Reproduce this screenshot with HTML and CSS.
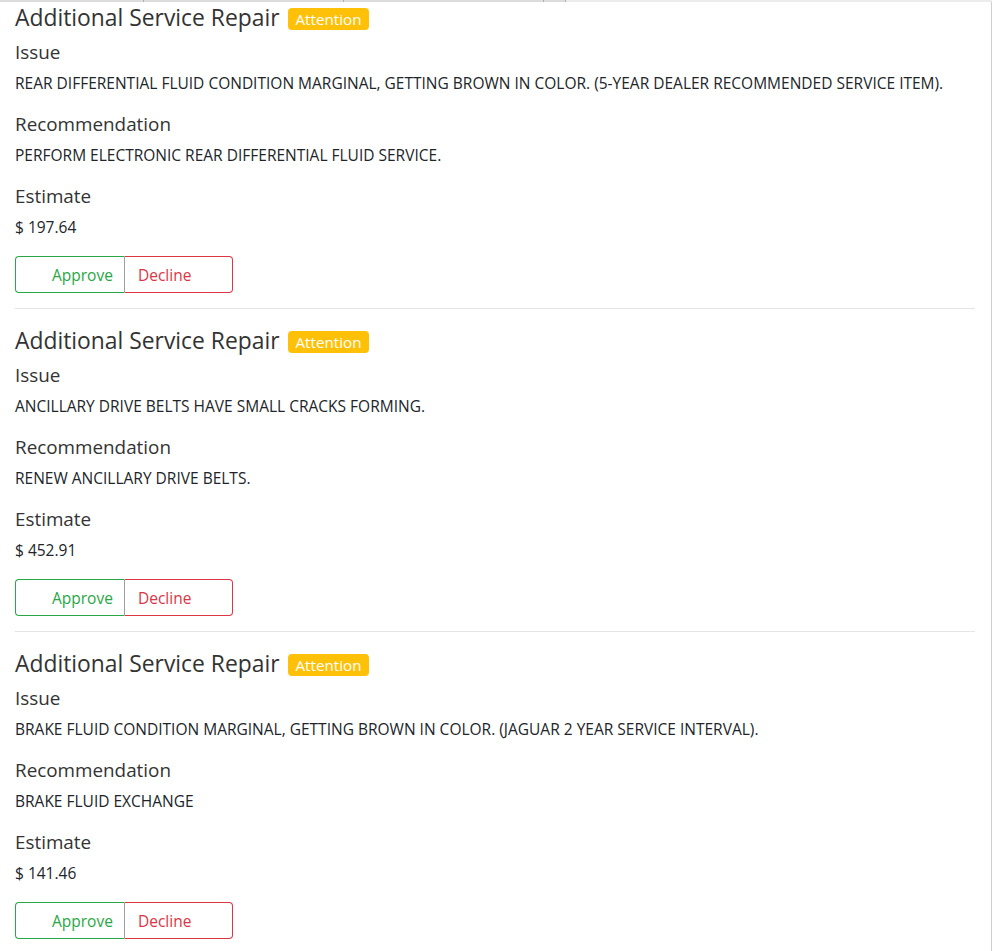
FILE: index.html
```html
<!DOCTYPE html>
<html>
<head>
<meta charset="utf-8">
<link rel="stylesheet" href="styles.css">
</head>
<body>
<div class="topbar">
  <div class="seg seg1"></div>
  <div class="seg seg2"></div>
  <div class="seg seg3"></div>
  <div class="seg seg4"></div>
  <div class="seg rest"></div>
</div>
<div class="page">
  <div class="container">
    <section class="repair">
      <h4 class="title"><span>Additional Service Repair</span><span class="badge">Attention</span></h4>
      <h5 class="label">Issue</h5>
      <p class="text">REAR DIFFERENTIAL FLUID CONDITION MARGINAL, GETTING BROWN IN COLOR. (5-YEAR DEALER RECOMMENDED SERVICE ITEM).</p>
      <h5 class="label">Recommendation</h5>
      <p class="text">PERFORM ELECTRONIC REAR DIFFERENTIAL FLUID SERVICE.</p>
      <h5 class="label">Estimate</h5>
      <p class="text">$ 197.64</p>
      <div class="btn-group">
        <button class="btn approve">Approve</button><button class="btn decline">Decline</button>
      </div>
    </section>
    <hr class="sep">
    <section class="repair">
      <h4 class="title"><span>Additional Service Repair</span><span class="badge">Attention</span></h4>
      <h5 class="label">Issue</h5>
      <p class="text">ANCILLARY DRIVE BELTS HAVE SMALL CRACKS FORMING.</p>
      <h5 class="label">Recommendation</h5>
      <p class="text">RENEW ANCILLARY DRIVE BELTS.</p>
      <h5 class="label">Estimate</h5>
      <p class="text">$ 452.91</p>
      <div class="btn-group">
        <button class="btn approve">Approve</button><button class="btn decline">Decline</button>
      </div>
    </section>
    <hr class="sep">
    <section class="repair">
      <h4 class="title"><span>Additional Service Repair</span><span class="badge">Attention</span></h4>
      <h5 class="label">Issue</h5>
      <p class="text">BRAKE FLUID CONDITION MARGINAL, GETTING BROWN IN COLOR. (JAGUAR 2 YEAR SERVICE INTERVAL).</p>
      <h5 class="label">Recommendation</h5>
      <p class="text">BRAKE FLUID EXCHANGE</p>
      <h5 class="label">Estimate</h5>
      <p class="text">$ 141.46</p>
      <div class="btn-group">
        <button class="btn approve">Approve</button><button class="btn decline">Decline</button>
      </div>
    </section>
  </div>
</div>
</body>
</html>
```
FILE: styles.css
```css
html, body {
  margin: 0;
  padding: 0;
  background: #fff;
}
body {
  font-family: "Open Sans", "Noto Sans", "Liberation Sans", sans-serif;
  color: #212529;
  height: 951px;
  overflow: hidden;
}
.topbar {
  display: flex;
  height: 2px;
}
.seg {
  height: 2px;
  background: #dcdcdc;
  border-right: 1px solid #b0b0b0;
  box-sizing: border-box;
}
.seg1 { width: 144px; }
.seg2 { width: 200px; }
.seg3 { width: 200px; }
.seg4 { width: 22px; }
.rest {
  flex: 1;
  background: #ececec;
  border-right: none;
}
.page {
  width: 992px;
  box-sizing: border-box;
  border-right: 1px solid #cfcfcf;
  height: 949px;
}
.container {
  width: 960px;
  padding: 2px 15px 0;
}
.title {
  display: flex;
  align-items: center;
  gap: 8px;
  margin: 0 0 8px;
  font-size: 22.85px;
  font-weight: 400;
  line-height: 28px;
  color: #333;
}
.badge {
  display: inline-block;
  background: #ffc107;
  color: #fff;
  font-size: 15.2px;
  line-height: 18px;
  padding: 2px 8px 2px;
  border-radius: 4px;
  margin-top: 2px;
}
.label {
  margin: 0 0 9px;
  font-size: 18.85px;
  font-weight: 400;
  line-height: 24px;
  color: #333;
}
.text {
  margin: 0 0 18px;
  font-size: 15.5px;
  line-height: 21px;
  color: #212529;
}
.btn-group {
  display: flex;
  margin-top: 0;
}
.btn {
  font-family: inherit;
  font-size: 15.5px;
  height: 37px;
  background: #fff;
  margin: 0;
  text-align: left;
  cursor: pointer;
}
.approve {
  width: 110px;
  color: #28a745;
  border: 1px solid #28a745;
  border-right: 1px solid #a0a0a0;
  border-radius: 4px 0 0 4px;
  padding: 0 0 0 36px;
}
.decline {
  width: 108px;
  color: #dc3545;
  border: 1px solid #dc3545;
  border-left: none;
  border-radius: 0 4px 4px 0;
  padding: 0 0 0 13px;
}
.sep {
  border: 0;
  border-top: 1px solid #e5e5e5;
  margin: 15px 0 18px;
  height: 0;
}
```
